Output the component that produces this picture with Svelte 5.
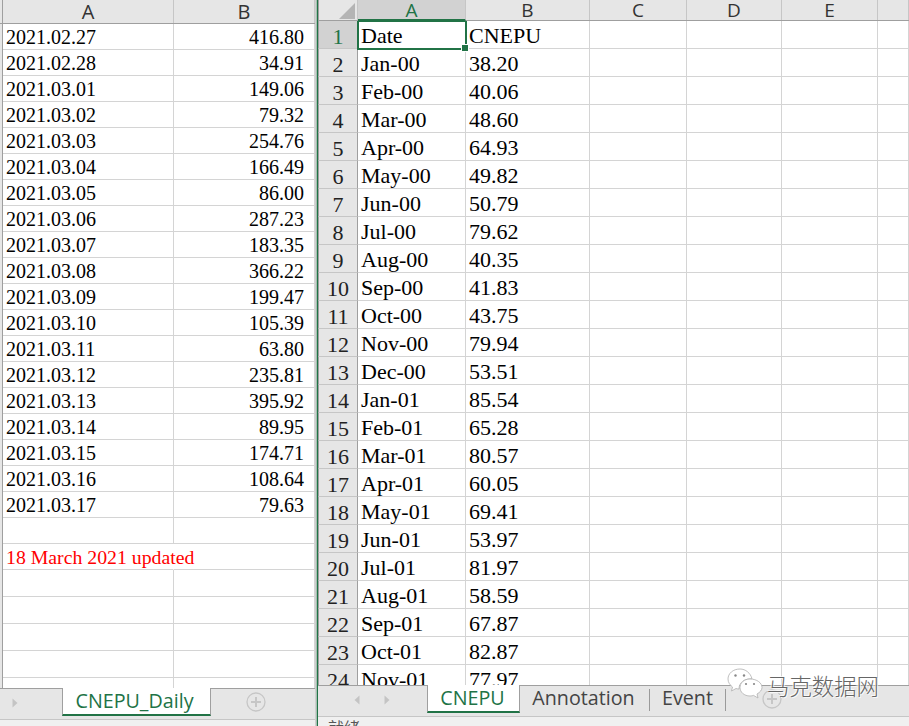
<script>
  const left = [
    ['2021.02.27','416.80'],['2021.02.28','34.91'],['2021.03.01','149.06'],['2021.03.02','79.32'],
    ['2021.03.03','254.76'],['2021.03.04','166.49'],['2021.03.05','86.00'],['2021.03.06','287.23'],
    ['2021.03.07','183.35'],['2021.03.08','366.22'],['2021.03.09','199.47'],['2021.03.10','105.39'],
    ['2021.03.11','63.80'],['2021.03.12','235.81'],['2021.03.13','395.92'],['2021.03.14','89.95'],
    ['2021.03.15','174.71'],['2021.03.16','108.64'],['2021.03.17','79.63'],['',''],
    ['18 March 2021 updated',''],['',''],['',''],['',''],['',''],['',''],['','']
  ];
  const right = [
    ['Date','CNEPU'],['Jan-00','38.20'],['Feb-00','40.06'],['Mar-00','48.60'],['Apr-00','64.93'],
    ['May-00','49.82'],['Jun-00','50.79'],['Jul-00','79.62'],['Aug-00','40.35'],['Sep-00','41.83'],
    ['Oct-00','43.75'],['Nov-00','79.94'],['Dec-00','53.51'],['Jan-01','85.54'],['Feb-01','65.28'],
    ['Mar-01','80.57'],['Apr-01','60.05'],['May-01','69.41'],['Jun-01','53.97'],['Jul-01','81.97'],
    ['Aug-01','58.59'],['Sep-01','67.87'],['Oct-01','82.87'],['Nov-01','77.97']
  ];
  const cols = ['C','D','E'];
</script>

<div class="page">
  <section class="pane leftpane">
    <div class="lhead">
      <div class="stub"></div>
      <div class="hc la">A</div>
      <div class="hc lb">B</div>
    </div>
    <div class="lbody">
      {#each left as row, i}
        <div class="lrow" class:tall={i > 20}>
          <div class="stub line"></div>
          <div class="c la" class:red={i === 20}>{row[0]}</div>
          <div class="c lb num">{row[1]}</div>
        </div>
      {/each}
    </div>
    <div class="tabs ltabs">
      <div class="arrows one"><svg width="6" height="10" viewBox="0 0 6 10"><path d="M0.5 0.5 5.500 5 0.5 9.500Z" fill="#c4c4c4"/></svg></div>
      <div class="tab active daily">CNEPU_Daily</div>
      <div class="plus lplus"><svg width="20" height="20" viewBox="0 0 20 20"><circle cx="10" cy="10" r="9" fill="none" stroke="#c6c6c6" stroke-width="1.3"/><path d="M5 10H15M10 5V15" stroke="#c6c6c6" stroke-width="2"/></svg></div>
    </div>
    <div class="foot lfoot"></div>
  </section>

  <div class="divider"></div>

  <section class="pane rightpane">
    <div class="rhead">
      <div class="corner"><svg width="18" height="18" viewBox="0 0 18 18"><path d="M17 1V17H1Z" fill="#b4b4b4"/></svg></div>
      <div class="hc ra sel">A</div>
      <div class="hc rb">B</div>
      {#each cols as c, i}<div class="hc rc{i}">{c}</div>{/each}
      <div class="hc rest"></div>
    </div>
    <div class="rbody">
      {#each right as row, i}
        <div class="rrow">
          <div class="rn" class:selrn={i === 0}>{i + 1}</div>
          <div class="c ra" class:active-cell={i === 0}>{row[0]}</div>
          <div class="c rb">{row[1]}</div>
          <div class="c rc0"></div><div class="c rc1"></div><div class="c rc2"></div><div class="c rest"></div>
        </div>
      {/each}
    </div>
    <div class="tabs rtabs">
      <div class="arrows two">
        <svg width="6" height="10" viewBox="0 0 6 10"><path d="M5.500 0.5 0.5 5 5.500 9.500Z" fill="#c4c4c4"/></svg>
        <svg width="6" height="10" viewBox="0 0 6 10"><path d="M0.5 0.5 5.500 5 0.5 9.500Z" fill="#c4c4c4"/></svg>
      </div>
      <div class="tab active cnepu">CNEPU</div>
      <div class="tab annot">Annotation</div>
      <div class="tab ev">Event</div>
      <div class="plus rplus"><svg width="20" height="20" viewBox="0 0 20 20"><circle cx="10" cy="10" r="9" fill="none" stroke="#c6c6c6" stroke-width="1.3"/><path d="M5 10H15M10 5V15" stroke="#c6c6c6" stroke-width="2"/></svg></div>
    </div>
    <div class="foot rfoot"><span>就绪</span></div>
  </section>

  <div class="mark">
    <svg width="36" height="34" viewBox="0 0 36 34">
      <path d="M13 1C6 1 1 5.500 1 11C1 14.500 3 17 5.500 19L4.500 23L9 20.500C10 20.800 11 21 12 21C12 14 18 10.500 25 10.800C23.500 5 18.500 1 13 1Z" fill="#fff" stroke="#b0b0b0" stroke-width=".8"/>
      <path d="M23 11C17 11 13 15 13 19.500C13 24 17 28 23 28C24.500 28 25.500 27.800 26.500 27.400L31 30L30 26C33 24.300 35 22 35 19.500C35 15 30 11 23 11Z" fill="#fff" stroke="#b0b0b0" stroke-width=".8"/>
      <circle cx="8.500" cy="7.500" r="1.200" fill="#888"/><circle cx="17" cy="7.500" r="1.200" fill="#888"/>
      <circle cx="19" cy="16" r="1.100" fill="#888"/><circle cx="27" cy="16" r="1.100" fill="#888"/>
    </svg>
    <span>马克数据网</span>
  </div>
</div>

<style>
  :global(body) { margin: 0; background: #fff; }
  .page {
    position: relative; width: 909px; height: 726px; overflow: hidden;
    display: flex; background: #fff;
    font-family: "Liberation Serif", "Times New Roman", serif; color: #000;
  }
  .pane { display: flex; flex-direction: column; height: 726px; overflow: hidden; }
  .leftpane { width: 315px; flex: none; }
  .rightpane { flex: 1; min-width: 0; }
  .divider { width: 3px; flex: none; background: linear-gradient(90deg, #bdbdbd, #e6e6e6 40%, #217346 70%, #217346); }

  .lhead { height: 24px; flex: none; display: flex; background: #e6e6e6; border-bottom: 1px solid #9f9f9f; box-sizing: border-box; }
  .hc {
    box-sizing: border-box; display: flex; align-items: center; justify-content: center;
    font-family: "Open Sans", Arial, sans-serif; font-size: 19px; line-height: 18px; color: #333;
    border-right: 1px solid #c6c6c6;
  }
  .lhead .hc { padding-top: 1px; font-size: 20px; }
  .stub { width: 3px; flex: none; border-right: 1px solid #9f9f9f; box-sizing: border-box; }
  .stub.line { background: #e6e6e6; }
  .la { width: 171px; flex: none; box-sizing: border-box; }
  .lb { width: 141px; flex: none; box-sizing: border-box; }
  .lbody { flex: 1; min-height: 0; overflow: hidden; }
  .lrow { display: flex; height: 26px; flex: none; }
  .lrow.tall { height: 27px; }
  .c {
    box-sizing: border-box; border-right: 1px solid #d4d4d4; border-bottom: 1px solid #d4d4d4;
    white-space: nowrap; overflow: visible;
  }
  .lrow .c { font-size: 20px; line-height: 26px; padding-left: 3px; }
  .lrow .num { text-align: right; padding-right: 10px; padding-left: 0; }
  .lrow .red { color: #ff0000; border-right-color: transparent; font-size: 19.800px; }

  .rhead { height: 21px; flex: none; display: flex; background: #e6e6e6; border-bottom: 1px solid #9f9f9f; box-sizing: border-box; }
  .corner { width: 40px; flex: none; box-sizing: border-box; border-right: 1px solid #c6c6c6; border-left: 1px solid #9f9f9f; display: flex; justify-content: flex-end; align-items: flex-end; padding-right: 1px; }
  .ra { width: 108px; flex: none; }
  .rb { width: 124px; flex: none; }
  .rc0 { width: 97px; flex: none; }
  .rc1 { width: 95px; flex: none; }
  .rc2 { width: 96px; flex: none; }
  .rest { flex: 1; min-width: 0; }
  .sel { background: #d2d2d2; color: #217346; border-bottom: 2px solid #217346; margin-bottom: -1px; }
  .rbody { flex: 1; min-height: 0; overflow: hidden; }
  .rrow { display: flex; height: 28px; flex: none; }
  .rn {
    width: 40px; flex: none; box-sizing: border-box; background: #e6e6e6;
    border-right: 1px solid #9f9f9f; border-bottom: 1px solid #c6c6c6; border-left: 1px solid #9f9f9f;
    font-size: 22px; line-height: 22px; color: #222;
    display: flex; align-items: center; justify-content: center; padding-top: 4px;
  }
  .selrn { background: #d2d2d2; color: #217346; }
  .rrow .c { font-size: 22px; line-height: 30px; padding-left: 3px; height: 28px; }
  .active-cell { position: relative; outline: 2px solid #217346; outline-offset: -1px; z-index: 2; }
  .active-cell::after { content: ""; position: absolute; right: -4px; bottom: -4px; width: 6px; height: 6px; background: #217346; border: 1px solid #fff; }

  .tabs {
    flex: none; display: flex; align-items: stretch; background: #e6e6e6; box-sizing: border-box;
    border-top: 1px solid #9f9f9f; border-bottom: 1px solid #c6c6c6;
    font-family: "Open Sans", "Noto Sans", sans-serif; font-size: 19.700px; color: #444;
  }
  .ltabs { height: 32px; }
  .rtabs { height: 32px; }
  .arrows { flex: none; display: flex; align-items: center; }
  .arrows.one { width: 62px; padding-left: 12px; box-sizing: border-box; padding-bottom: 3px; }
  .arrows.two { width: 109px; padding-left: 36px; box-sizing: border-box; gap: 24px; padding-bottom: 3px; }
  .tab { display: flex; align-items: center; justify-content: center; box-sizing: border-box; padding-bottom: 4px; }
  .tab.active {
    background: #fff; color: #217346; border-left: 1px solid #9f9f9f; border-right: 1px solid #9f9f9f;
    border-bottom: 2px solid #217346; margin-top: -1px; margin-bottom: 3px; padding-bottom: 1px;
  }
  .daily { width: 149px; padding-right: 4px; }
  .cnepu { width: 93px; padding-right: 2px; }
  .annot { width: 129px; padding-right: 2px; padding-bottom: 8px; }
  .ev { width: 77px; border-left: 1px solid #9a9a9a; border-right: 1px solid #9a9a9a; margin: 3px 0 5px; padding-bottom: 5px; }
  .plus { flex: none; display: flex; align-items: center; padding-bottom: 4px; }
  .lplus { padding-left: 35px; }
  .rplus { padding-left: 36px; }
  .foot { flex: none; background: #f0f0f0; }
  .lfoot { height: 6px; }
  .rfoot { height: 9px; overflow: hidden; font-family: "Noto Sans CJK SC", sans-serif; font-size: 16px; color: #555; line-height: 18px; padding-left: 10px; }
  .rfoot span { display: block; margin-top: 1px; }

  .mark {
    position: absolute; left: 727px; top: 668px; display: flex; align-items: center; gap: 4px;
    font-family: "Noto Sans CJK SC", sans-serif; font-weight: 300; font-size: 22.400px; color: #666;
    text-shadow: 1px 1px 0 rgba(255,255,255,.8), -1px -1px 0 rgba(255,255,255,.8);
  }
</style>
